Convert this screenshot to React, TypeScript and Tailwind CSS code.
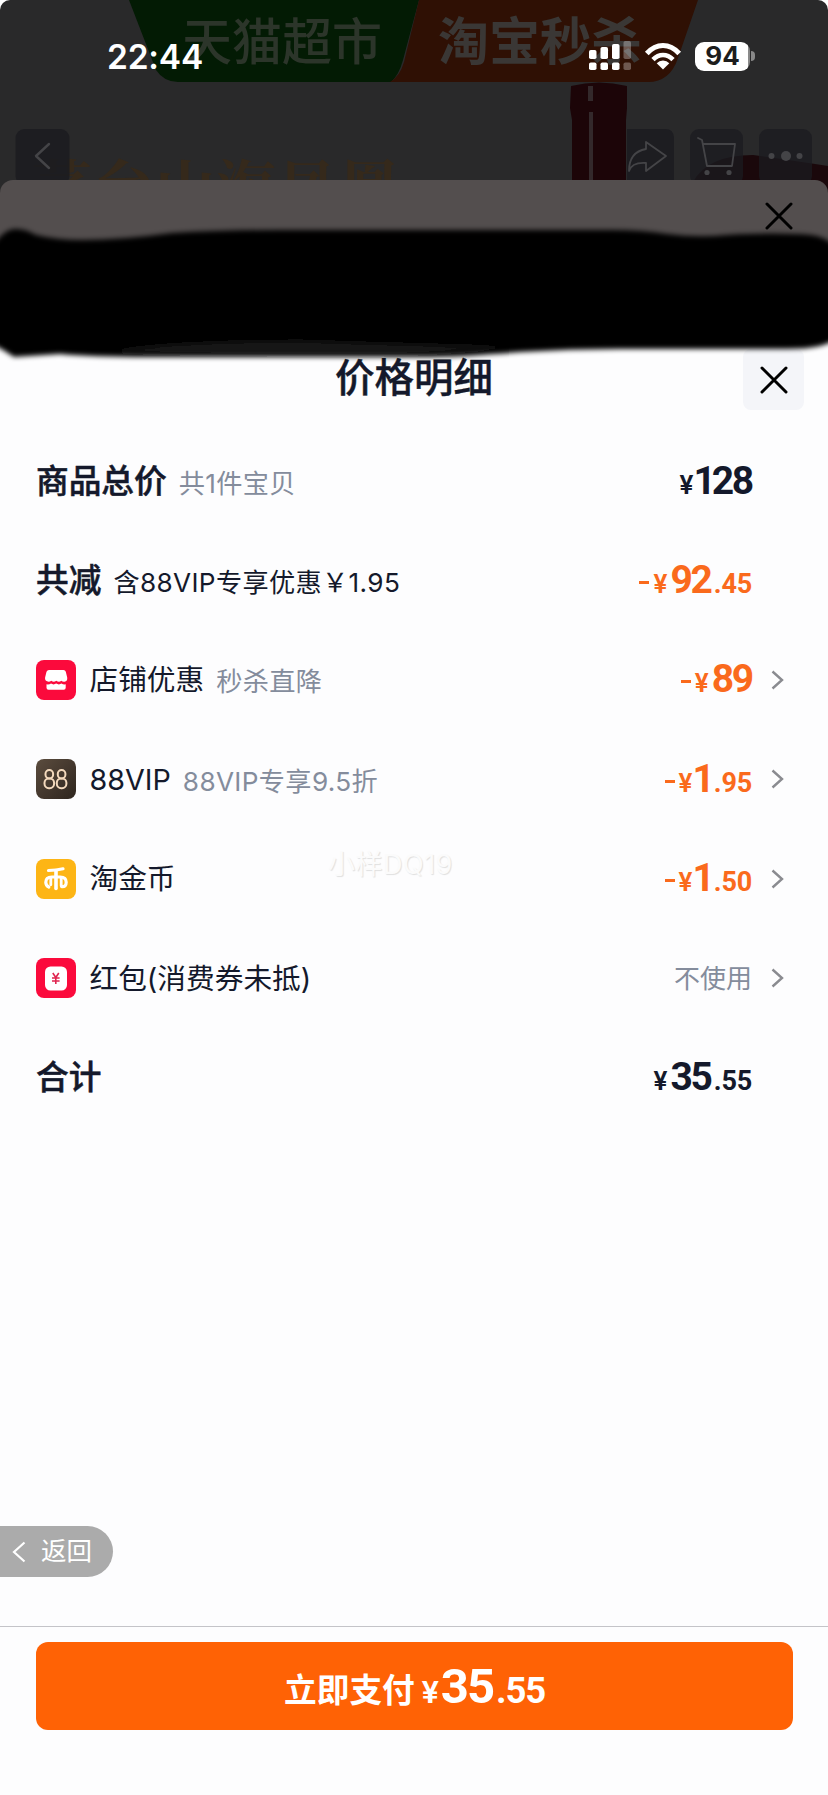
import type { ReactNode } from "react";
import clsx from "clsx";

type Amount = { minus?: boolean; int: string; dec?: string };

type PriceRow = {
  id: string;
  icon?: ReactNode;
  title: string;
  note?: string;
  noteDark?: boolean;
  amount?: Amount;
  text?: string;
  link?: boolean;
};

const ROWS: PriceRow[] = [
  { id: "total", title: "商品总价", note: "共1件宝贝", amount: { int: "128" } },
  {
    id: "discount",
    title: "共减",
    note: "含88VIP专享优惠￥1.95",
    noteDark: true,
    amount: { minus: true, int: "92", dec: "45" },
  },
  {
    id: "shop",
    icon: <ShopIcon />,
    title: "店铺优惠",
    note: "秒杀直降",
    amount: { minus: true, int: "89" },
    link: true,
  },
  {
    id: "vip",
    icon: <VipIcon />,
    title: "88VIP",
    note: "88VIP专享9.5折",
    amount: { minus: true, int: "1", dec: "95" },
    link: true,
  },
  {
    id: "coin",
    icon: <CoinIcon />,
    title: "淘金币",
    amount: { minus: true, int: "1", dec: "50" },
    link: true,
  },
  { id: "packet", icon: <PacketIcon />, title: "红包(消费券未抵)", text: "不使用", link: true },
  { id: "sum", title: "合计", amount: { int: "35", dec: "55" } },
];

function ShopIcon() {
  return (
    <svg viewBox="0 0 40 40" className="size-10">
      <rect width="40" height="40" rx="8" fill="#fb0a3c" />
      <path
        d="M13 10h14.500q1.800 0 2.300 1.800l1.400 5.700q.5 3.700-2.700 4.200-2 .2-3.200-1-2.300 2-5 0-2.600 2-5 0-1.500 1.200-3.500.9-3.200-.8-2.700-4.100l1.400-5.700q.7-1.800 2.500-1.800z"
        fill="#fff"
      />
      <path
        d="M10.500 24.300q2.500.5 4.500-.7 2.500 1.600 5.200 0 2.700 1.600 5.300 0 2 1.200 4.200.7v3.400q0 2-2 2H12.500q-2 0-2-2z"
        fill="#fff"
      />
    </svg>
  );
}

function VipIcon() {
  return (
    <svg viewBox="0 0 40 40" className="size-10">
      <defs>
        <linearGradient id="vip" x1="0" y1="0" x2="1" y2="1">
          <stop offset="0" stopColor="#5b4c3e" />
          <stop offset="1" stopColor="#2e251e" />
        </linearGradient>
      </defs>
      <rect width="40" height="40" rx="8" fill="url(#vip)" />
      <g fill="none" stroke="#f3d9bd" strokeWidth="2">
        <rect x="9.500" y="11" width="7.600" height="8.400" rx="3.700" />
        <rect x="8.500" y="19.400" width="9.600" height="9.800" rx="4.400" />
        <rect x="21.800" y="11" width="7.600" height="8.400" rx="3.700" />
        <rect x="20.800" y="19.400" width="9.600" height="9.800" rx="4.400" />
      </g>
    </svg>
  );
}

function CoinIcon() {
  return (
    <svg viewBox="0 0 40 40" className="size-10">
      <rect width="40" height="40" rx="8" fill="#fdb515" />
      <g fill="none" stroke="#fff" strokeWidth="3.200" strokeLinecap="round">
        <path d="M12.500 11.500q8-.1 14.500-1.700" />
        <path d="M20 11.500v18" strokeWidth="3.600" />
        <path d="M12.800 28q-3-1.300-3-4.700 0-5.300 6-5.300h8.400q6 0 6 5.300 0 4.700-4.400 4.400" />
        <path d="M14.800 19v6.800" strokeWidth="2.800" />
        <path d="M25.200 19v8" strokeWidth="2.800" />
      </g>
    </svg>
  );
}

function PacketIcon() {
  return (
    <svg viewBox="0 0 40 40" className="size-10">
      <rect width="40" height="40" rx="8" fill="#fb0a3c" />
      <rect x="9" y="8.500" width="22" height="24" rx="5.500" fill="#fff" />
      <path
        d="M16.800 15l3 4.500 3-4.500M16 20h7.600M16 23h7.600M19.800 19.500v6.500"
        fill="none"
        stroke="#e0254f"
        strokeWidth="1.600"
      />
    </svg>
  );
}

function CloseIcon() {
  return (
    <svg viewBox="0 0 28 28" className="size-7" fill="none" stroke="#000" strokeWidth="3" strokeLinecap="round">
      <path d="M2 2l24 24M26 2L2 26" />
    </svg>
  );
}

// the price face has a narrow "1", so it is pulled in on both sides
function Digits({ value, className }: { value: string; className?: string }) {
  return (
    <span className={className}>
      {value.split("").map((d, i) => (
        <span key={i} className={d === "1" ? "-mr-[2px] -ml-[3px]" : undefined}>
          {d}
        </span>
      ))}
    </span>
  );
}

function Price({ minus, int, dec }: Amount) {
  return (
    <span
      className={clsx(
        "flex items-baseline font-[Roboto,sans-serif] leading-none",
        minus ? "text-[#fa6a1c]" : "text-[#14192b]",
      )}
    >
      {minus && <span className="mr-[4px] mb-[16px] h-[3px] w-[10px] self-end bg-current" />}
      <span className="mr-[2px] w-[15px] text-[26px] font-semibold">¥</span>
      <Digits value={int} className="text-[39px] font-bold tracking-[-2.200px]" />
      {dec && <span className="ml-[3px] text-[27px] font-bold tracking-[-0.200px]">.{dec}</span>}
    </span>
  );
}

function Row({ row }: { row: PriceRow }) {
  return (
    <li className="flex h-[99.400px] items-center pl-9">
      {row.icon && <span className="mr-[13.500px] shrink-0">{row.icon}</span>}
      <span
        className={clsx(
          "shrink-0 text-[#14192b]",
          row.icon
            ? "text-[28.700px]"
            : "text-[32.700px] font-medium [-webkit-text-stroke:0.500px]",
        )}
      >
        {row.title}
      </span>
      {row.note && (
        <span
          className={clsx(
            "mt-[4px] ml-[12px] text-[26.200px] tracking-[0.350px]",
            row.noteDark ? "text-[#14192b]" : "text-[#848c9c]",
          )}
        >
          {row.note}
        </span>
      )}
      <span className="ml-auto">
        {row.amount && <Price {...row.amount} />}
        {row.text && <span className="text-[26px] text-[#848c9c]">{row.text}</span>}
      </span>
      <span className="w-[76px] shrink-0 pl-[19px]">
        {row.link && (
          <svg viewBox="0 0 14 20" className="h-5 w-3.5" fill="none" stroke="#8a8b90" strokeWidth="2.400">
            <path d="M1.500 1.500l9.500 8.500-9.500 8.500" />
          </svg>
        )}
      </span>
    </li>
  );
}

function StatusBar() {
  return (
    <div className="relative flex h-[112px] items-center pl-[107px] text-white">
      <span className="mt-[2px] font-[Inter,sans-serif] text-[33.500px] font-semibold tracking-[-0.200px]">22:44</span>
      <svg viewBox="0 0 44 30" className="ml-auto h-[30px] w-11" fill="#fff">
        <rect x="1" y="9" width="7.500" height="9" rx="1.800" />
        <rect x="12.500" y="6" width="7.500" height="12" rx="1.800" />
        <rect x="24" y="3" width="7.500" height="15" rx="1.800" />
        <rect x="1" y="21.500" width="7.500" height="7.500" rx="1.800" />
        <rect x="12.500" y="21.500" width="7.500" height="7.500" rx="1.800" />
        <rect x="24" y="21.500" width="7.500" height="7.500" rx="1.800" />
        <g opacity=".3">
          <rect x="35.500" y="0" width="7.500" height="18" rx="1.800" />
          <rect x="35.500" y="21.500" width="7.500" height="7.500" rx="1.800" />
        </g>
      </svg>
      <svg viewBox="0 0 38 28" className="ml-[12.500px] h-7 w-[38px]">
        <g fill="none" stroke="#fff" strokeWidth="5">
          <path d="M2.800 11.500Q10 3.500 19 3.500t16.200 8" />
          <path d="M9 17.600q4.500-4.600 10-4.600t10 4.600" strokeWidth="4.600" />
        </g>
        <path d="M19 27.500l-6.300-6.200q2.600-2.700 6.300-2.700t6.300 2.700z" fill="#fff" />
      </svg>
      <div className="mr-[73px] ml-[13px] flex items-center">
        <div className="flex h-[29px] w-[55px] items-center justify-center rounded-[9px] bg-[linear-gradient(to_right,#fff_96%,#8a8a8a_96%)] font-[Inter,sans-serif] text-[26px] leading-none font-bold text-[#1c1c1c]">
          94
        </div>
        <div className="ml-[1px] h-[10px] w-[4px] rounded-r-full bg-[#888]" />
      </div>
    </div>
  );
}

/** Dimmed product page that stays visible above the sheets */
function Backdrop() {
  return (
    <svg viewBox="0 0 828 200" className="absolute inset-x-0 top-0 h-[200px] w-[828px]">
      <path d="M129 0h290l-16 60q-4 15-12 22H178q-14 0-22-12z" fill="#031b04" />
      <path d="M419 0h279l-20 58q-8 24-30 24H390q10-6 14-20z" fill="#2f1004" />
      <text x="182" y="60" fontSize="50" fill="#2c352a" fontWeight="500">天猫超市</text>
      <text x="438" y="60" fontSize="51" fill="#3a3735" fontWeight="700">淘宝秒杀</text>
      <path d="M571 86q28-7 56 0v22l-1 12v80h-54v-80l-2-12z" fill="#1c0508" />
      <path d="M588 86h5v15h-5zM589 112h4v88h-4z" fill="#33292b" />
      <path d="M693 182q15-27 60-27 42 6 75 11v34H693z" fill="#1a080b" />
      <text x="32" y="210" fontSize="60" fill="#35291b" fontWeight="700" fontFamily="'Noto Serif CJK SC','Noto Sans CJK SC',serif" letterSpacing="1.500">
        茅台山海凤凰
      </text>
      <g fill="#1b1b20" fillOpacity=".88">
        <rect x="15.500" y="129" width="54" height="56" rx="9" />
        <path d="M627 129h38q9 0 9 9v47h-47z" />
        <rect x="690" y="129" width="53" height="56" rx="9" fillOpacity=".75" />
        <rect x="759" y="129" width="53" height="56" rx="9" fillOpacity=".75" />
      </g>
      <g fill="none" stroke="#444447" strokeWidth="1.800" strokeLinejoin="round" strokeLinecap="round">
        <path d="M49 144L36 156l13 12" strokeWidth="2.400" />
        <path d="M646 142l20 14-20 15v-8q-14-1-17 8 0-19 17-22z" />
        <path d="M698 138l4 2 5 26h25l3-22h-31" />
      </g>
      <g fill="#444447">
        <circle cx="707" cy="172.500" r="2.600" />
        <circle cx="729" cy="172.500" r="2.600" />
        <circle cx="771.500" cy="156" r="3" />
        <circle cx="786" cy="156" r="5" />
        <circle cx="799.500" cy="156" r="3" />
      </g>
    </svg>
  );
}

/** Hand-painted marker stroke that hides the delivery address */
function Scribble() {
  return (
    <svg viewBox="0 200 828 180" className="pointer-events-none absolute inset-x-0 top-[200px] h-[180px] w-[828px]">
      <defs>
        <filter id="soft" x="-5%" y="-20%" width="110%" height="140%">
          <feGaussianBlur stdDeviation="2.500" />
        </filter>
      </defs>
      <g filter="url(#soft)">
        <path
          d="M-6 244Q4 230 14 229q10-1 22 6 20 5 46 5 40 0 90-7 50-3 110-3h330q30 0 55 4 30 4 60 1 50-3 84 0 16 2 24 12v92q-10 10-48 10H620q-50 0-100 3-60 5-100 5H150q-60 0-90-3l-46 3Q4 350-8 344z"
          fill="#000"
        />
        <path d="M110 352q60-11 190-11 130 4 210 6-70 7-130 8-150 1-270-3z" fill="#141414" />
      </g>
    </svg>
  );
}

export default function App() {
  return (
    <div className="relative flex h-[1795px] w-[828px] flex-col overflow-hidden bg-white font-[Inter,'Noto_Sans_CJK_SC',sans-serif]">
      <header className="relative h-[200px] shrink-0 rounded-t-[10px] bg-[#29292a]">
        <Backdrop />
        <StatusBar />
      </header>

      <section className="relative -mt-5 flex h-[155px] shrink-0 items-start justify-end rounded-t-[13px] bg-[#534e4e] pt-[22px] pr-[35px]">
        <CloseIcon />
      </section>

      <main className="relative flex flex-1 flex-col bg-[#fdfdfe] pt-[12.500px]">
        <div className="grid h-[64px] grid-cols-[1fr_auto_1fr] items-center">
          <h1 className="col-start-2 -mt-[2px] text-[39.500px] leading-none font-medium text-[#14192b] [-webkit-text-stroke:0.400px]">
            价格明细
          </h1>
          <button
            aria-label="关闭"
            className="mr-[24px] flex size-[61px] items-center justify-center justify-self-end rounded-lg bg-[#f4f5f9]"
          >
            <CloseIcon />
          </button>
        </div>
        <ul className="mt-[20px]">
          {ROWS.map((row) => (
            <Row key={row.id} row={row} />
          ))}
        </ul>
        <button className="mt-auto mb-[49px] flex h-[51px] w-[113px] items-center rounded-r-full bg-[#ababab] pl-[12px] text-white">
          <svg viewBox="0 0 14 22" className="h-[22px] w-3.5" fill="none" stroke="#fff" strokeWidth="2.200">
            <path d="M12.500 1.500L2 11l10.500 9.500" />
          </svg>
          <span className="ml-[15px] text-[25.500px]">返回</span>
        </button>
      </main>

      <footer className="h-[169px] shrink-0 border-t border-[#c4c4c8] bg-[#fdfdfe] pt-[15px] pr-[35px] pl-[36px]">
        <button className="flex h-[88px] w-full items-center justify-center rounded-xl bg-[#ff6205] text-white">
          <span className="flex items-baseline leading-none">
            <span className="-translate-y-[1px] text-[32.700px] font-bold">立即支付</span>
            <span className="ml-[6px] flex items-baseline font-[Roboto,sans-serif] font-bold">
              <span className="mr-[1px] w-[19px] text-[32px] font-semibold">¥</span>
              <span className="text-[49px] tracking-[-2px]">35</span>
              <span className="ml-[3px] text-[36.500px] tracking-[-1.200px]">.55</span>
            </span>
          </span>
        </button>
      </footer>

      <Scribble />
      <span className="pointer-events-none absolute top-[845px] left-[328px] text-[27px] tracking-[0.500px] text-[#fbfbfb] [text-shadow:1px_1px_1px_#e0e0e0]">
        小样DQ19
      </span>
    </div>
  );
}
